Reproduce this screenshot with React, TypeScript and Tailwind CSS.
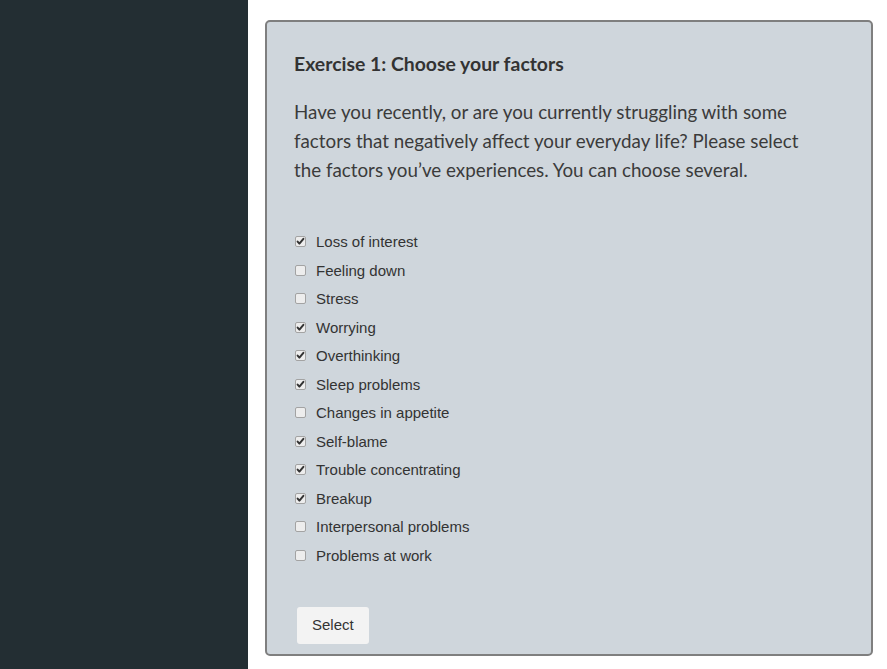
import React from "react";

const factors = [
  { name: "Loss of interest", checked: true },
  { name: "Feeling down", checked: false },
  { name: "Stress", checked: false },
  { name: "Worrying", checked: true },
  { name: "Overthinking", checked: true },
  { name: "Sleep problems", checked: true },
  { name: "Changes in appetite", checked: false },
  { name: "Self-blame", checked: true },
  { name: "Trouble concentrating", checked: true },
  { name: "Breakup", checked: true },
  { name: "Interpersonal problems", checked: false },
  { name: "Problems at work", checked: false },
];

const App = () => {
  return (
    <div className="w-full h-[669px] flex bg-white overflow-hidden">
      <aside className="w-[248px] shrink-0 bg-[#232e33]" />
      <main className="flex-1 pl-[17px] pr-[14px] pt-[20px]">
        <div className="h-[636px] border-2 border-[#7f7f7f] rounded-[5px] bg-[#cfd6dc] pl-[27px] pt-[29px]">
          <h5 className="text-[19.4px] leading-[26px] font-bold text-[#333] font-['Lato',sans-serif]">
            Exercise 1: Choose your factors
          </h5>
          <p className="mt-[20px] w-[512px] text-[18.8px] leading-[29px] text-[#3b3b3b] font-['Lato',sans-serif]">
            Have you recently, or are you currently struggling with some
            factors that negatively affect your everyday life? Please select
            the factors you’ve experiences. You can choose several.
          </p>
          <form className="mt-[44px] font-['Liberation_Sans',Arial,sans-serif]">
            {factors.map((f) => (
              <label
                key={f.name}
                className="flex items-center h-[28.5px] text-[15px] text-[#333]"
              >
                <span className="relative ml-[1px] mr-[10px] w-[11px] h-[11px] -mt-[1px]">
                  <input
                    type="checkbox"
                    defaultChecked={f.checked}
                    className="peer appearance-none block w-[11px] h-[11px] rounded-[2px] border border-[#a3a3a3] bg-[#ededed] m-0"
                  />
                  <svg
                    viewBox="0 0 11 11"
                    className="absolute inset-0 w-[11px] h-[11px] hidden peer-checked:block pointer-events-none"
                  >
                    <path
                      d="M2.6 5.6 L4.4 7.6 L8.4 2.8"
                      fill="none"
                      stroke="#333"
                      strokeWidth="2"
                      strokeLinecap="round"
                      strokeLinejoin="round"
                    />
                  </svg>
                </span>
                {f.name}
              </label>
            ))}
            <button
              type="button"
              className="mt-[37px] ml-[3px] h-[37px] px-[15px] bg-[#f3f3f3] rounded-[3px] text-[15px] text-[#333]"
            >
              Select
            </button>
          </form>
        </div>
      </main>
    </div>
  );
};

export default App;
